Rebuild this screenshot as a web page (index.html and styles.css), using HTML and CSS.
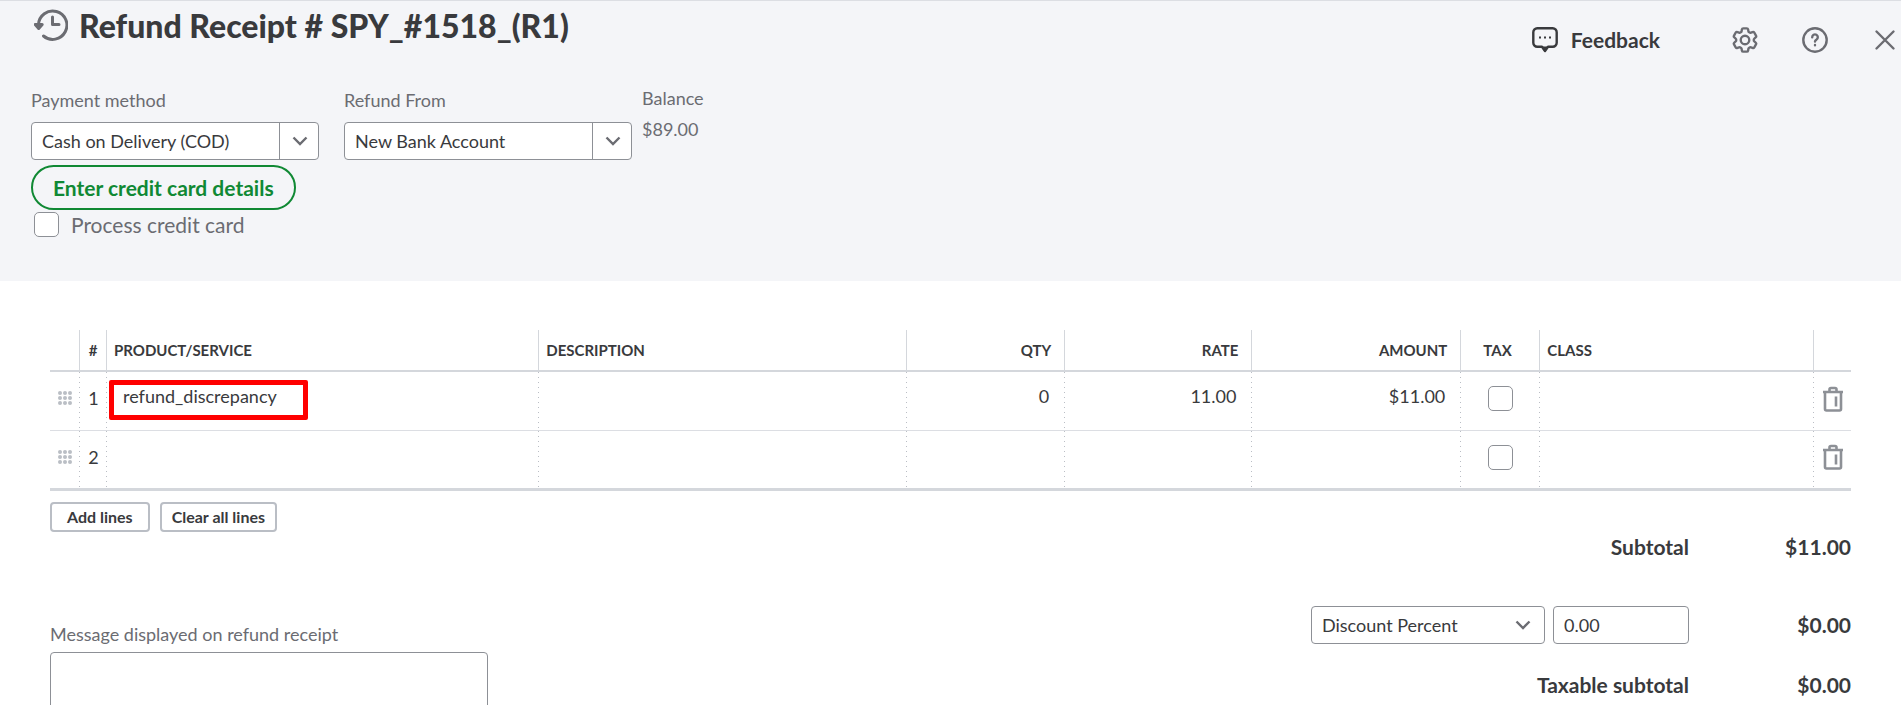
FILE: index.html
```html
<!DOCTYPE html>
<html lang="en">
<head>
<meta charset="utf-8">
<title>Refund Receipt</title>
<link rel="stylesheet" href="styles.css">
</head>
<body>
<svg class="sprite" aria-hidden="true">
  <symbol id="trash" viewBox="0 0 22 26"><path d="M1 6h20M7.500 5.500V3.500A1.500 1.500 0 0 1 9 2h4a1.500 1.500 0 0 1 1.500 1.500v2M3 6.500v16.500a1.500 1.500 0 0 0 1.500 1.500h13a1.500 1.500 0 0 0 1.500-1.500v-16.500M14 10.500v10"/></symbol>
  <symbol id="grip" viewBox="0 0 14 14"><g><circle cx="2" cy="2" r="2"/><circle cx="7" cy="2" r="2"/><circle cx="12" cy="2" r="2"/><circle cx="2" cy="7" r="2"/><circle cx="7" cy="7" r="2"/><circle cx="12" cy="7" r="2"/><circle cx="2" cy="12" r="2"/><circle cx="7" cy="12" r="2"/><circle cx="12" cy="12" r="2"/></g></symbol>
  <symbol id="chevron" viewBox="0 0 16 10"><path d="M1.500 1.500 8 8l6.500-6.500"/></symbol>
</svg>
<header class="top">
  <div class="titlebar">
    <div class="heading">
      <svg class="history" viewBox="0 0 34 34" aria-hidden="true"><path class="line" d="M4.500 18v-1.500A14.200 14.200 0 1 1 9.500 28M18.500 9v7.500H25"/><path class="fill" d="M1.200 16.500h7L4.700 20.500z"/></svg>
      <h1>Refund Receipt # SPY_#1518_(R1)</h1>
    </div>
    <nav class="tools">
      <button class="feedback" type="button">
        <svg viewBox="0 0 26 26" aria-hidden="true"><path d="M5.500 1.300h15a4 4 0 0 1 4.200 4.200v10a4 4 0 0 1-4.200 4.200H16L13 24l-3-4.300H5.500a4 4 0 0 1-4.200-4.200v-10a4 4 0 0 1 4.200-4.200z"/><path class="tail" d="M10 20h6l-3 4z"/><path class="dots" d="M7 10.500h2M12 10.500h2M17 10.500h2"/></svg>
        Feedback
      </button>
      <button class="tool" type="button" aria-label="Settings"><svg class="gear" viewBox="2 2 20 20" aria-hidden="true"><path d="M9.594 3.940c.09-.542.56-.94 1.110-.94h2.593c.55 0 1.020.398 1.110.94l.213 1.281c.063.374.313.686.645.87.074.04.147.083.22.127.325.196.72.257 1.075.124l1.217-.456a1.125 1.125 0 0 1 1.370.49l1.296 2.247a1.125 1.125 0 0 1-.26 1.431l-1.003.827c-.293.241-.438.613-.43.992a7.723 7.723 0 0 1 0 .255c-.008.378.137.75.43.991l1.004.827c.424.35.534.955.26 1.430l-1.298 2.247a1.125 1.125 0 0 1-1.369.491l-1.217-.456c-.355-.133-.75-.072-1.076.124a6.470 6.470 0 0 1-.22.128c-.331.183-.581.495-.644.869l-.213 1.281c-.09.543-.56.94-1.110.94h-2.594c-.55 0-1.019-.398-1.110-.94l-.213-1.281c-.062-.374-.312-.686-.644-.87a6.520 6.520 0 0 1-.22-.127c-.325-.196-.72-.257-1.076-.124l-1.217.456a1.125 1.125 0 0 1-1.369-.49l-1.297-2.247a1.125 1.125 0 0 1 .26-1.431l1.004-.827c.292-.24.437-.613.43-.991a6.932 6.932 0 0 1 0-.255c.007-.38-.138-.751-.43-.992l-1.004-.827a1.125 1.125 0 0 1-.26-1.430l1.297-2.247a1.125 1.125 0 0 1 1.370-.491l1.216.456c.356.133.751.072 1.076-.124.072-.044.146-.086.22-.128.332-.183.582-.495.644-.869l.214-1.280z"/><circle cx="12" cy="12" r="3.300"/></svg></button>
      <button class="tool" type="button" aria-label="Help"><svg viewBox="0 0 26 26" aria-hidden="true"><circle cx="13" cy="13" r="11.700"/><path d="M10.200 10.200a2.800 2.800 0 1 1 4.300 2.400c-1 .6-1.500 1-1.500 2M13 18v.2"/></svg></button>
      <button class="tool" type="button" aria-label="Close"><svg viewBox="0 0 26 26" aria-hidden="true"><path d="m4.500 4.500 17 17m0-17-17 17"/></svg></button>
    </nav>
  </div>
  <div class="payment">
    <div class="field">
      <label for="method">Payment method</label>
      <div class="combo"><select id="method"><option>Cash on Delivery (COD)</option></select><svg aria-hidden="true"><use href="#chevron"/></svg></div>
      <button class="card-button" type="button">Enter credit card details</button>
      <label class="process"><input class="check" type="checkbox">Process credit card</label>
    </div>
    <div class="field">
      <label for="from">Refund From</label>
      <div class="combo"><select id="from"><option>New Bank Account</option></select><svg aria-hidden="true"><use href="#chevron"/></svg></div>
    </div>
    <div class="balance"><span>Balance</span><span>$89.00</span></div>
  </div>
</header>
<main class="content">
  <table class="lines">
    <colgroup><col class="c-grip"><col class="c-num"><col class="c-product"><col class="c-desc"><col class="c-qty"><col class="c-rate"><col class="c-amount"><col class="c-tax"><col class="c-class"><col class="c-del"></colgroup>
    <thead>
      <tr><th></th><th class="mid">#</th><th>PRODUCT/SERVICE</th><th>DESCRIPTION</th><th class="num">QTY</th><th class="num">RATE</th><th class="num">AMOUNT</th><th class="tax">TAX</th><th>CLASS</th><th></th></tr>
    </thead>
    <tbody>
      <tr><td class="mid"><svg class="grip" aria-hidden="true"><use href="#grip"/></svg></td><td class="mid">1</td><td class="product"><span class="marked">refund_discrepancy</span></td><td></td><td class="num">0</td><td class="num">11.00</td><td class="num">$11.00</td><td class="mid"><input class="check" type="checkbox" aria-label="Tax line 1"></td><td></td><td class="mid"><button class="delete" type="button" aria-label="Delete line 1"><svg aria-hidden="true"><use href="#trash"/></svg></button></td></tr>
      <tr><td class="mid"><svg class="grip" aria-hidden="true"><use href="#grip"/></svg></td><td class="mid">2</td><td></td><td></td><td></td><td></td><td></td><td class="mid"><input class="check" type="checkbox" aria-label="Tax line 2"></td><td></td><td class="mid"><button class="delete" type="button" aria-label="Delete line 2"><svg aria-hidden="true"><use href="#trash"/></svg></button></td></tr>
    </tbody>
  </table>
  <div class="below">
    <section class="left">
      <div class="line-buttons"><button type="button">Add lines</button><button type="button">Clear all lines</button></div>
      <label class="message-label" for="message">Message displayed on refund receipt</label>
      <textarea id="message"></textarea>
    </section>
    <section class="totals">
      <div class="total"><span>Subtotal</span><span>$11.00</span></div>
      <div class="total discount">
        <div class="discount-fields">
          <div class="combo plain"><select aria-label="Discount type"><option>Discount Percent</option></select><svg aria-hidden="true"><use href="#chevron"/></svg></div>
          <input class="rate" type="text" value="0.00" aria-label="Discount value">
        </div>
        <span>$0.00</span>
      </div>
      <div class="total"><span>Taxable subtotal</span><span>$0.00</span></div>
    </section>
  </div>
</main>
</body>
</html>
```
FILE: styles.css
```css
* { box-sizing: border-box; }
body {
  margin: 0;
  background: #fff;
  color: #393a3d;
  font: 18px/24px Lato, "Open Sans", sans-serif;
  overflow: hidden;
}
button, input, select, textarea { font: inherit; color: inherit; }
button { cursor: pointer; }
.sprite { position: absolute; width: 0; height: 0; }

.top {
  background: #f4f5f8;
  border-top: 1px solid #dcdee3;
  padding-bottom: 44px;
}
.titlebar { display: flex; justify-content: space-between; }
.heading { display: flex; align-items: flex-start; gap: 11px; padding: 7px 0 0 34px; }
.history { width: 34px; height: 34px; }
.history path { stroke: #6b6c72; stroke-width: 3; stroke-linecap: round; stroke-linejoin: round; }
.history .line { fill: none; }
.history .fill { fill: #6b6c72; }
h1 { margin: 0; font-size: 32px; line-height: 36px; font-weight: 900; }
.tools { display: flex; align-items: center; gap: 44px; padding: 26px 3px 0 0; height: 52px; }
.tools button { display: flex; align-items: center; border: 0; padding: 0; background: none; }
.tools svg { width: 26px; height: 26px; fill: none; stroke: #6b6c72; stroke-width: 2.4; stroke-linejoin: round; stroke-linecap: round; }
.tools .gear { stroke-width: 1.8; }
.tools .feedback { gap: 13px; margin-right: 28px; font-size: 21px; font-weight: 700; }
.tools .feedback svg { stroke: #393a3d; }
.tools .tail { fill: #393a3d; stroke-width: 1; }
.tools .dots { stroke-linecap: butt; stroke-width: 2; }

.payment { display: flex; gap: 25px; padding: 33px 31px 0; }
.field { display: flex; flex-direction: column; align-items: flex-start; padding-top: 2px; color: #6b6c72; }
.field > label { margin-bottom: 10px; }
.combo { position: relative; width: 288px; color: #393a3d; }
.combo select {
  display: block;
  width: 100%;
  height: 38px;
  padding: 0 36px 0 10px;
  appearance: none;
  border: 1px solid #8d9096;
  border-radius: 4px;
  background: linear-gradient(#8d9096, #8d9096) right 38px top / 1px 100% no-repeat #fff;
}
.combo svg {
  position: absolute;
  top: 14px;
  right: 11px;
  width: 16px;
  height: 10px;
  fill: none;
  stroke: #6b6c72;
  stroke-width: 2.4;
  pointer-events: none;
}
.card-button {
  margin-top: 5px;
  height: 45px;
  padding: 0 20px;
  border: 2px solid #108934;
  border-radius: 23px;
  background: transparent;
  color: #108934;
  font-size: 21px;
  font-weight: 700;
}
.field > .process { display: flex; align-items: center; gap: 12px; margin: 2px 0 0 3px; font-size: 21px; }
.check {
  display: inline-block;
  width: 25px;
  height: 25px;
  margin: 0;
  appearance: none;
  border: 1px solid #8d9096;
  border-radius: 5px;
  background: #fff;
  vertical-align: middle;
}
.balance { display: flex; flex-direction: column; gap: 7px; margin-left: -15px; color: #6b6c72; }

.content { padding: 49px 50px 0; }
.lines { width: 100%; table-layout: fixed; border-spacing: 0; border-bottom: 3px solid #d4d7dc; }
.c-grip { width: 30px; }
.c-num { width: 27px; }
.c-product { width: 24%; }
.c-desc { width: 20.4%; }
.c-qty { width: 8.8%; }
.c-rate { width: 10.4%; }
.c-amount { width: 11.6%; }
.c-tax { width: 79px; }
.c-del { width: 37px; }
th {
  height: 42px;
  padding: 0 13px 0 7px;
  border-right: 1px solid #d4d7dc;
  border-bottom: 2px solid #d4d7dc;
  font-size: 15px;
  font-weight: 700;
  text-align: left;
}
th.tax { padding: 0 22px; }
td {
  height: 58px;
  padding: 0 16px 10px 8px;
  background: linear-gradient(#babec5 1px, transparent 1px) right top / 1px 5px repeat-y;
}
tbody tr + tr td { border-top: 1px solid #dcdee3; }
th:last-child { border-right: 0; }
td:last-child { background: none; }
.num { text-align: right; }
.lines .mid { padding: 0; text-align: center; }
.lines td.mid { padding-bottom: 6px; }
.grip { width: 14px; height: 14px; fill: #babec5; }
.lines .product { padding: 0 0 2px 2px; }
.marked { display: block; width: 199px; padding: 2px 9px 10px; border: 5px solid #f00; border-radius: 2px; line-height: 18px; }
.delete { display: inline-block; padding: 0; border: 0; background: none; vertical-align: middle; }
.delete svg { display: block; width: 22px; height: 26px; fill: none; stroke: #8d9096; stroke-width: 2.6; }

.below { display: flex; justify-content: space-between; padding-top: 11px; }
.left { display: flex; flex-direction: column; align-items: flex-start; }
.line-buttons { display: flex; gap: 10px; }
.line-buttons button {
  height: 30px;
  padding: 0 10px;
  border: 2px solid #babec5;
  border-radius: 4px;
  background: #fff;
  font-size: 16px;
  line-height: 20px;
  font-weight: 700;
}
.line-buttons button:first-child { padding: 0 15px; }
.message-label { margin: 90px 0 6px; color: #6b6c72; }
textarea { width: 438px; height: 100px; border: 1px solid #8d9096; border-radius: 4px; resize: none; }
.totals { display: flex; flex-direction: column; padding-top: 33px; font-size: 21px; font-weight: 700; }
.total { display: grid; grid-template-columns: 1fr 162px; align-items: center; text-align: right; }
.discount { margin: 47px 0 29px; }
.discount-fields { display: flex; gap: 8px; font-size: 18px; font-weight: 400; }
.plain { width: 234px; }
.plain select { background: #fff; }
.plain svg { right: 14px; }
.rate { width: 136px; height: 38px; padding: 0 10px; border: 1px solid #8d9096; border-radius: 4px; }
```
